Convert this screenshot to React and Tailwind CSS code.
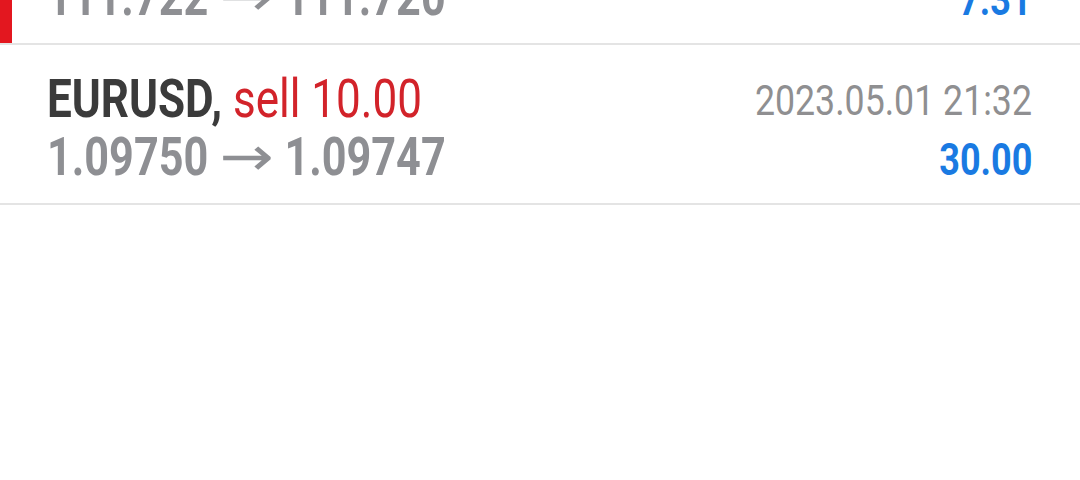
const trades = [
  {
    symbol: "USDJPY",
    side: "sell",
    volume: "10.00",
    open: "111.722",
    close: "111.720",
    time: "2023.05.01 21:30",
    profit: "7.31",
    marked: true,
  },
  {
    symbol: "EURUSD",
    side: "sell",
    volume: "10.00",
    open: "1.09750",
    close: "1.09747",
    time: "2023.05.01 21:32",
    profit: "30.00",
    marked: false,
  },
];

function TradeRow({ trade }) {
  return (
    <div className="relative h-[160px] border-b-2 border-[#e4e4e4] pl-[47px] pr-[48px] pt-[27px]">
      {trade.marked && (
        <div className="absolute left-0 top-0 bottom-0 w-[12px] bg-[#e3171f]" />
      )}
      <div className="flex items-baseline justify-between leading-[54px]">
        <span className="inline-block origin-left scale-x-[0.815] whitespace-nowrap text-[54px]">
          <span className="font-bold text-[#3b3b3b]">{trade.symbol},</span>{" "}
          <span className="text-[#d2232a]">
            {trade.side} {trade.volume}
          </span>
        </span>
        <span className="inline-block origin-right -translate-y-[2px] scale-x-[0.85] whitespace-nowrap text-[42px] text-[#8f8f91]">
          {trade.time}
        </span>
      </div>
      <div className="flex items-baseline justify-between leading-[54px]">
        <span className="inline-block origin-left scale-x-[0.8] whitespace-nowrap text-[54px] font-bold text-[#8e8f93]">
          {trade.open}
          <span className="mx-[25px] inline-block scale-x-[1.5] font-['DejaVu_Sans',sans-serif] font-normal">
            →
          </span>
          {trade.close}
        </span>
        <span className="inline-block origin-right scale-x-[0.8] whitespace-nowrap text-[45px] font-bold text-[#1a7ae2]">
          {trade.profit}
        </span>
      </div>
    </div>
  );
}

export default function App() {
  return (
    <div className="h-[480px] w-[1080px] overflow-hidden bg-white font-['Roboto',sans-serif]">
      <div className="-mt-[115px]">
        {trades.map((t, i) => (
          <TradeRow key={i} trade={t} />
        ))}
      </div>
    </div>
  );
}
